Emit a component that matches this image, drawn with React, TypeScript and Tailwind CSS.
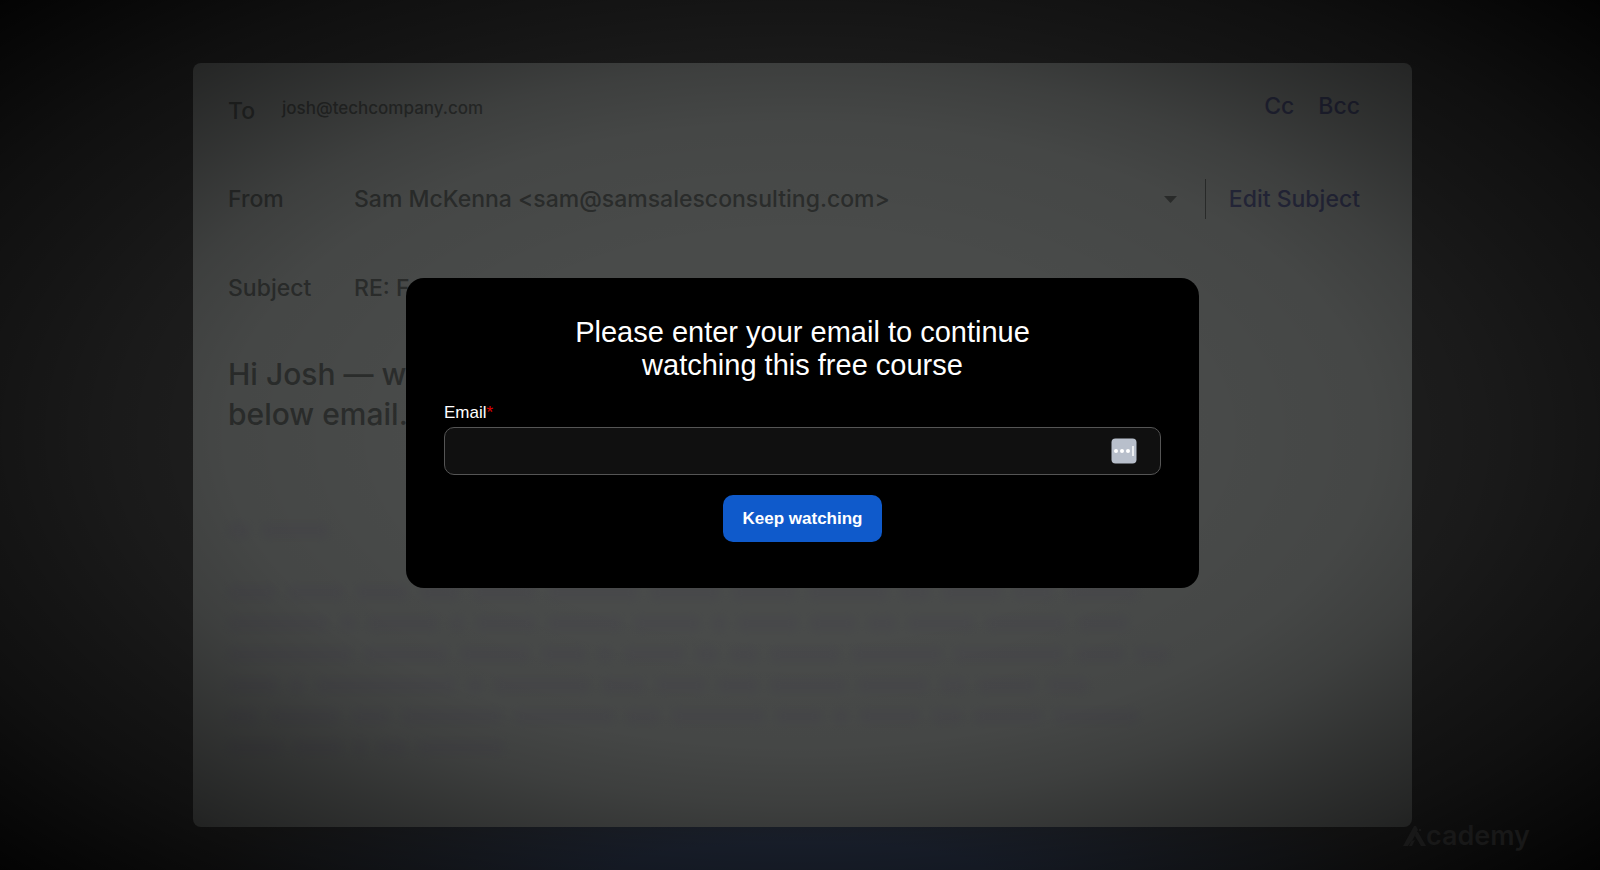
import { FormEvent, useState } from "react";

// word widths of the faded paragraph under the message
const quotedLines = [
	[22, 66],
	[],
	[48, 56, 52, 40, 64, 90, 70, 64, 80, 30, 60, 40, 72],
	[100, 16, 70, 14, 60, 74, 66, 14, 60, 46, 28, 66, 80, 50],
	[124, 84, 70, 44, 14, 60, 22, 28, 70, 90, 110, 48, 32],
	[50, 14, 140, 14, 96, 42, 50, 40, 76, 70, 26, 58, 40],
	[30, 70, 38, 100, 100, 34, 92, 46, 14, 60, 30, 68, 84],
	[54, 48, 12, 28, 86],
];

const EmailHeader = () => {
	return (
		<div className="flex flex-col text-[23px] leading-[32px] font-medium text-[#2b2d2c]">
			<div className="flex items-start pr-[52px]">
				<div className="w-[54px] pt-[5px]">To</div>
				<div className="flex-1 text-[17px] pt-[2px]">josh@techcompany.com</div>
				<div className="flex gap-6 text-[#26283c]">
					<button type="button">Cc</button>
					<button type="button">Bcc</button>
				</div>
			</div>
			<div className="flex items-center mt-[52px] pr-[52px]">
				<div className="w-[126px]">From</div>
				<div className="flex-1">Sam McKenna &lt;sam@samsalesconsulting.com&gt;</div>
				<svg className="w-[13px] h-[7px] mr-[28px]" viewBox="0 0 13 7" fill="currentColor">
					<path d="M0 0h13L6.5 7z" />
				</svg>
				<div className="w-px h-[40px] bg-[#2b2d2c] mr-[23px]"></div>
				<button type="button" className="text-[#26283c]">
					Edit Subject
				</button>
			</div>
			<div className="flex items-center mt-[53px]">
				<div className="w-[126px]">Subject</div>
				<div>RE: F</div>
			</div>
		</div>
	);
};

const QuotedText = () => {
	return (
		<div className="flex flex-col gap-4 mt-[89px] blur-[3px] opacity-60">
			{quotedLines.map((words, i) => {
				return (
					<div key={i} className="flex gap-3 h-[15px]">
						{words.map((w, j) => (
							<div key={j} className="h-full rounded-full bg-[#47474b]" style={{ width: w }}></div>
						))}
					</div>
				);
			})}
		</div>
	);
};

const Watermark = () => {
	return (
		<div className="absolute right-[70px] bottom-[17px] flex items-center text-[#181818]">
			<svg className="w-[23px] h-[20px]" viewBox="0 0 23 20" fill="currentColor">
				<path d="M0 20 11 0h2L15 4 9 15l3-1-3 6H6l3-6-4 6z" />
				<path d="M13 6l2 0 8 14h-5l-6-10z" />
				<path d="M16 3h2v2h-2z" />
			</svg>
			<div className="text-[27px] leading-[34px] font-semibold">cademy</div>
		</div>
	);
};

const EmailGate = () => {
	const [email, setEmail] = useState("");

	const onSubmit = (e: FormEvent) => {
		e.preventDefault();
	};

	return (
		<form
			onSubmit={onSubmit}
			className="w-full max-w-[793px] bg-black rounded-[18px] px-[38px] pt-[38px] pb-[46px] text-white font-['Liberation_Sans',Arial,sans-serif]"
		>
			<h1 className="max-w-[480px] mx-auto text-center text-[29px] leading-[33px]">
				Please enter your email to continue watching this free course
			</h1>
			<label htmlFor="email" className="block mt-[21px] text-[17px] leading-[20px]">
				Email<span className="text-[#e00000]">*</span>
			</label>
			<div className="relative mt-1">
				<input
					id="email"
					type="email"
					value={email}
					onChange={(e) => setEmail(e.target.value)}
					className="block w-full h-[48px] pl-4 pr-16 rounded-[10px] border border-[#555555] bg-[#101010] text-[17px] outline-none"
				/>
				<svg className="absolute right-[24px] top-[11px] w-[26px] h-[26px]" viewBox="0 0 26 26">
					<rect x="0.5" y="0.5" width="25" height="25" rx="4" fill="#b8bfcb" />
					<circle cx="5" cy="13" r="2" fill="#fff" />
					<circle cx="11" cy="13" r="2" fill="#fff" />
					<circle cx="17" cy="13" r="2" fill="#fff" />
					<path d="M22 8v10" stroke="#fff" strokeWidth="1.5" />
				</svg>
			</div>
			<div className="flex justify-center mt-[20px]">
				<button
					type="submit"
					className="h-[47px] px-5 rounded-[10px] bg-[#0f5acb] text-[17px] font-bold"
				>
					Keep watching
				</button>
			</div>
		</form>
	);
};

const App = () => {
	return (
		<div className="relative flex flex-col min-h-screen overflow-hidden bg-[#1f1f1f] bg-[radial-gradient(ellipse_600px_90px_at_50%_100%,#1f2737_30%,#1f1f1f_100%)] pt-[63px] pb-[43px] pl-[193px] pr-[188px] font-[Inter,'Noto_Sans',sans-serif]">
			<div className="flex-1 rounded-[8px] bg-[#494b4a] pt-[27px] pl-[35px]">
				<EmailHeader />
				<p className="mt-[50px] text-[30px] leading-[40px] font-medium text-[#2b2d2c]">
					Hi Josh — w<br />
					below email.
				</p>
				<QuotedText />
			</div>
			<div className="absolute inset-0 pointer-events-none bg-[radial-gradient(ellipse_farthest-corner_at_center,transparent_32%,rgba(0,0,0,0.06)_51%,rgba(0,0,0,0.16)_60%,rgba(0,0,0,0.33)_70%,rgba(0,0,0,0.5)_81%,rgba(0,0,0,0.9)_100%)]"></div>
			<Watermark />
			<div className="absolute inset-0 flex items-center justify-center pl-[5px] pb-1">
				<EmailGate />
			</div>
		</div>
	);
};

export default App;
